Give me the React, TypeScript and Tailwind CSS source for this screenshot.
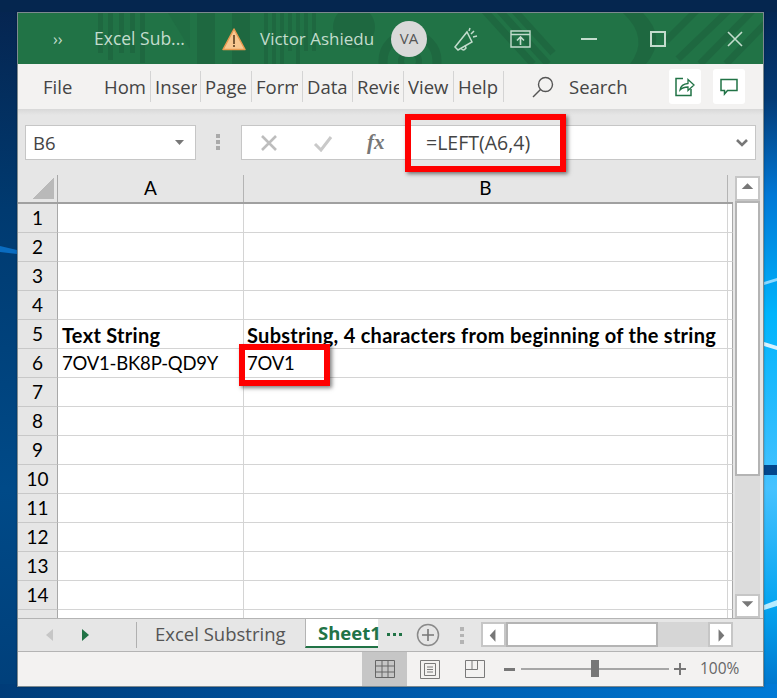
import { ReactNode } from "react";

const ui = "font-['Open_Sans','Noto_Sans',sans-serif]";
const cell = "font-['Lato','Carlito',sans-serif]";

const tabs = [
  { label: "Hom", w: "w-[47px]" },
  { label: "Inser", w: "w-[46px]" },
  { label: "Page", w: "w-[47px]" },
  { label: "Form", w: "w-[47px]" },
  { label: "Data", w: "w-[46px]" },
  { label: "Revie", w: "w-[47px]" },
  { label: "View", w: "w-[46px]" },
  { label: "Help", w: "w-[46px]" },
];

const rows: { n: number; a?: string; b?: string; bold?: boolean }[] = [
  { n: 1 }, { n: 2 }, { n: 3 }, { n: 4 },
  { n: 5, a: "Text String", b: "Substring, 4 characters from beginning of the string", bold: true },
  { n: 6, a: "7OV1-BK8P-QD9Y", b: "7OV1" },
  { n: 7 }, { n: 8 }, { n: 9 }, { n: 10 }, { n: 11 }, { n: 12 }, { n: 13 }, { n: 14 },
];

function Wallpaper() {
  return (
    <svg className="absolute inset-0 h-full w-full" viewBox="0 0 777 698">
      <defs>
        <linearGradient id="wl" x1="0" y1="0" x2="0" y2="1">
          <stop offset="0" stopColor="#06244f" />
          <stop offset="0.3" stopColor="#003a70" />
          <stop offset="0.7" stopColor="#004a88" />
          <stop offset="1" stopColor="#003f7a" />
        </linearGradient>
        <linearGradient id="wr" x1="0" y1="0" x2="0" y2="1">
          <stop offset="0" stopColor="#04244e" />
          <stop offset="0.14" stopColor="#033a75" />
          <stop offset="0.28" stopColor="#0078d6" />
          <stop offset="0.45" stopColor="#00b4fc" />
          <stop offset="0.7" stopColor="#46c2ff" />
          <stop offset="0.87" stopColor="#04a4f0" />
          <stop offset="1" stopColor="#0070c8" />
        </linearGradient>
        <linearGradient id="wb" x1="0" y1="0" x2="1" y2="0">
          <stop offset="0" stopColor="#003c78" />
          <stop offset="0.5" stopColor="#0058a8" />
          <stop offset="1" stopColor="#007ad6" />
        </linearGradient>
      </defs>
      <rect width="777" height="698" fill="url(#wl)" />
      <rect x="700" width="77" height="698" fill="url(#wr)" />
      <rect y="684" width="777" height="14" fill="url(#wb)" />
      <rect y="0" width="777" height="12" fill="#05264f" />
      <path d="M0 246 L17 250 V254 L0 252 Z" fill="#0a6cc0" />
      <path d="M764 282 L777 278 V281 L764 285 Z" fill="#8ad8ff" />
      <path d="M764 342 L777 346 V350 L764 346 Z" fill="#d8f2ff" />
      <rect x="764" y="465" width="13" height="10" fill="#03478c" />
      <path d="M764 605 L777 600 V606 L764 610 Z" fill="#b8ecff" />
    </svg>
  );
}

function TitlePattern() {
  const d = "#1e6840";
  return (
    <svg className="absolute inset-0 h-full w-full" viewBox="0 0 745 51">
      <g fill={d}>
        <rect x="80" y="0" width="5" height="40" />
        <rect x="90" y="0" width="5" height="47" />
        <rect x="101" y="0" width="5" height="40" />
        <rect x="112" y="0" width="5" height="40" />
        <rect x="122" y="0" width="5" height="50" />
        <rect x="179" y="0" width="18" height="51" />
        <rect x="214" y="0" width="18" height="51" />
        <rect x="246" y="0" width="4" height="51" />
        <rect x="254" y="0" width="4" height="51" />
        <rect x="262" y="0" width="4" height="51" />
        <rect x="270" y="0" width="4" height="38" />
        <rect x="278" y="0" width="4" height="51" />
        <rect x="286" y="0" width="4" height="38" />
        <rect x="294" y="0" width="4" height="38" />
        <circle cx="336" cy="14" r="21" />
        <path d="M150 0 L172 36 V0 Z" opacity="0.5" />
      </g>
      <circle cx="392" cy="48" r="27" fill="none" stroke={d} strokeWidth="9" />
      <circle cx="392" cy="48" r="9" fill="none" stroke={d} strokeWidth="6" />
      <path d="M605 0 Q632 25 612 51 L628 51 Q650 25 625 0 Z" fill={d} />
      <g stroke={d} strokeWidth="7" fill="none">
        <path d="M465 -4 L515 51" />
        <path d="M480 -4 L530 51" />
        <path d="M495 -4 L535 40" />
        <path d="M648 28 L680 -4" />
        <path d="M660 46 L712 -4" />
        <path d="M682 51 L736 -4" />
        <path d="M708 51 L748 10" />
      </g>
    </svg>
  );
}

function Warning() {
  return (
    <svg width="24" height="24" viewBox="0 0 24 24">
      <path d="M12 2 L23 22.5 H1 Z" fill="#f8c890" stroke="#e89a50" strokeWidth="1.5" strokeLinejoin="round" />
      <rect x="11" y="8" width="2" height="9" fill="#7a5a36" />
      <rect x="11" y="18" width="2" height="2" fill="#7a5a36" />
    </svg>
  );
}

function Icon({ w, h, children, className }: { w: number; h: number; children: ReactNode; className?: string }) {
  return (
    <svg width={w} height={h} viewBox={`0 0 ${w} ${h}`} className={className} fill="none">
      {children}
    </svg>
  );
}

function ArrowBtn({ dir, className }: { dir: "up" | "down" | "left" | "right"; className: string }) {
  const p = { up: "M5 11 H17 L11 5 Z", down: "M5 6 H17 L11 12 Z", left: "M13 5 V18 L7 11.5 Z", right: "M9 5 V18 L15 11.5 Z" }[dir];
  return (
    <div className={`flex items-center justify-center border-2 border-[#c6c6c6] bg-white ${className}`}>
      <Icon w={22} h={22}>
        <path d={p} fill="#777" />
      </Icon>
    </div>
  );
}

function TitleBar() {
  const t = "#c3dccd";
  return (
    <div className={`relative flex h-[51px] shrink-0 items-center bg-[#217346] ${ui}`}>
      <TitlePattern />
      <div className="relative flex w-full items-center text-[#c3dccd]">
        <span className="ml-[35px] w-[41px] text-[16px] leading-none">››</span>
        <span className="w-[128px] text-[17.5px] whitespace-nowrap">Excel Sub...</span>
        <Warning />
        <span className="ml-[14px] w-[131px] text-[17px] whitespace-nowrap">Victor Ashiedu</span>
        <div className="flex h-[36px] w-[36px] items-center justify-center rounded-full bg-[#d9d9d9] text-[15px] text-[#555]">VA</div>
        <Icon w={26} h={26} className="ml-[26px]">
          <path d="M2 21 L14 6 L19 16 L5 24 Z M8 22 Q10 26 13 22 L12 19" stroke={t} strokeWidth="1.5" />
          <path d="M18 8 L21 5 M20 11 L24 10 M16 5 L17 2" stroke={t} strokeWidth="1.5" />
        </Icon>
        <Icon w={21} h={18} className="ml-[31px]">
          <path d="M1 1 H20 V17 H1 Z M1 4.5 H20" stroke={t} strokeWidth="1.4" />
          <path d="M10.5 15 V8 M7 10.5 L10.5 7 L14 10.5" stroke={t} strokeWidth="1.6" />
        </Icon>
        <div className="ml-[50px] h-[2px] w-[16px] bg-[#c3dccd]" />
        <div className="ml-[53px] h-[16px] w-[16px] border-2 border-[#c3dccd]" />
        <Icon w={16} h={16} className="ml-[61px]">
          <path d="M1 1 L15 15 M15 1 L1 15" stroke={t} strokeWidth="1.6" />
        </Icon>
      </div>
    </div>
  );
}

function RibbonTabs() {
  return (
    <div className={`flex h-[45px] shrink-0 items-center bg-[#f3f2f1] text-[18.5px] text-[#444] ${ui}`}>
      <span className="ml-[25px] w-[61px]">File</span>
      {tabs.map((t) => (
        <div key={t.label} className={`mr-[4px] flex h-[31px] items-center whitespace-nowrap border-r border-[#d4d4d4] ${t.w}`}>
          <span className="h-[31px] w-[42px] overflow-hidden leading-[31px]">{t.label}</span>
        </div>
      ))}
      <Icon w={22} h={22} className="ml-[24px]">
        <circle cx="13.5" cy="8.5" r="7" stroke="#555" strokeWidth="1.4" />
        <path d="M8.5 13.5 L1 21" stroke="#555" strokeWidth="1.5" />
      </Icon>
      <span className="ml-[15px] w-[60px]">Search</span>
      <div className="ml-[40px] flex h-[35px] w-[32px] items-center justify-center rounded-[3px] bg-white">
        <Icon w={20} h={20}>
          <path d="M8 1.5 H1 V18.5 H16 V12" stroke="#217346" strokeWidth="1.5" />
          <path d="M5 13 Q6 7 13 6.5 V2.5 L19 8 L13 13.5 V10 Q8 10 5 13 Z" stroke="#217346" strokeWidth="1.3" />
        </Icon>
      </div>
      <div className="ml-[12px] flex h-[35px] w-[32px] items-center justify-center rounded-[3px] bg-white">
        <Icon w={18} h={18}>
          <path d="M1 1.5 H17 V12.5 H7.5 L4.5 16 V12.5 H1 Z" stroke="#217346" strokeWidth="1.5" />
        </Icon>
      </div>
    </div>
  );
}

function FormulaBar() {
  return (
    <div className="flex h-[66px] shrink-0 items-start bg-[#e6e6e6] bg-[linear-gradient(#d8d8d8,#e6e6e6_6px)] pt-[16px]">
      <div className={`ml-[7px] flex h-[35px] w-[171px] items-center border border-[#c6c6c6] bg-white pl-[7px] text-[18.5px] text-[#444] ${ui}`}>
        <span className="flex-1">B6</span>
        <Icon w={9} h={5} className="mr-[11px]">
          <path d="M0 0 H9 L4.5 5 Z" fill="#777" />
        </Icon>
      </div>
      <div className="ml-[20px] mt-[9px] flex w-[4px] flex-col gap-[2.5px]">
        <div className="h-[3.5px] bg-[#aaa]" />
        <div className="h-[3.5px] bg-[#aaa]" />
        <div className="h-[3.5px] bg-[#aaa]" />
      </div>
      <div className={`ml-[21px] flex h-[35px] w-[515px] items-center border border-[#c6c6c6] bg-white text-[19.5px] text-[#444] ${ui}`}>
        <Icon w={18} h={18} className="ml-[18px]">
          <path d="M2 2 L16 16 M16 2 L2 16" stroke="#bdbdbd" strokeWidth="2.6" />
        </Icon>
        <Icon w={20} h={18} className="ml-[35px]">
          <path d="M2 10 L8 16 L18 3" stroke="#c9c9c9" strokeWidth="3" />
        </Icon>
        <span className="ml-[34px] w-[38px] font-['Liberation_Serif',serif] text-[21px] font-bold italic text-[#777]">fx</span>
        <span className="ml-[21px] flex-1">=LEFT(A6,4)</span>
        <Icon w={12} h={8} className="mr-[7px]">
          <path d="M1 1 L6 6 L11 1" stroke="#777" strokeWidth="2.6" />
        </Icon>
      </div>
    </div>
  );
}

function Grid() {
  return (
    <div className="flex min-h-0 flex-1 bg-[#e6e6e6]">
      <div className="flex w-[715px] flex-col overflow-hidden">
        {/* column headers */}
        <div className={`flex h-[29px] shrink-0 border-b-2 border-[#a0a0a0] text-[19px] text-black ${cell}`}>
          <div className="flex w-[40px] items-end justify-end border-r border-[#a8a8a8] pb-[3px] pr-[3px]">
            <div className="h-[21px] w-[21px] bg-[linear-gradient(135deg,transparent_50%,#b9b9b9_50%)]" />
          </div>
          <div className="flex w-[186px] items-center justify-center border-r border-[#b4b4b4]">A</div>
          <div className="flex w-[484px] items-center justify-center border-r border-[#b4b4b4]">B</div>
        </div>
        {rows.map((r) => (
          <div key={r.n} className={`flex h-[29px] shrink-0 text-black ${cell}`}>
            <div className="flex w-[40px] items-center justify-center border-b border-r border-[#a8a8a8] border-b-[#c8c8c8] bg-[#e6e6e6] pt-[1px] text-[19px]">{r.n}</div>
            <div className={`flex w-[186px] items-center border-b border-r border-[#d4d4d4] bg-white pl-[4px] pt-[1px] whitespace-nowrap ${r.bold ? "text-[20px] font-bold tracking-[0.28px]" : "text-[18.5px] tracking-[-0.2px]"}`}>{r.a}</div>
            <div className={`flex w-[484px] items-center border-b border-r border-[#d4d4d4] bg-white pl-[3px] pt-[1px] whitespace-nowrap ${r.bold ? "text-[20px] font-bold tracking-[0.28px]" : "text-[18.5px] tracking-[-0.2px]"}`}>{r.b}</div>
            <div className="w-[5px] border-b border-r border-[#d4d4d4] border-r-[#a8a8a8] bg-white" />
          </div>
        ))}
        <div className="flex min-h-0 flex-1">
          <div className="w-[40px] border-r border-[#a8a8a8] bg-[#e6e6e6]" />
          <div className="w-[186px] border-r border-[#d4d4d4] bg-white" />
          <div className="w-[484px] border-r border-[#d4d4d4] bg-white" />
          <div className="w-[5px] border-r border-[#a8a8a8] bg-white" />
        </div>
      </div>
      {/* vertical scrollbar */}
      <div className="ml-[2px] flex w-[25px] flex-col pt-[1px]">
        <ArrowBtn dir="up" className="h-[25px] shrink-0" />
        <div className="h-[275px] shrink-0 border-2 border-[#b4b4b4] bg-white" />
        <div className="flex-1 bg-[#dcdcdc]" />
        <ArrowBtn dir="down" className="h-[24px] shrink-0" />
      </div>
    </div>
  );
}

function SheetTabs() {
  return (
    <div className={`flex h-[34px] shrink-0 items-start border-y border-y-[#b4b4b4] bg-[#e6e6e6] text-[18.5px] ${ui}`}>
      <Icon w={10} h={14} className="ml-[27px] mt-[9px]">
        <path d="M8 1 V13 L1 7 Z" fill="#c6c6c6" />
      </Icon>
      <Icon w={10} h={14} className="ml-[25px] mt-[9px]">
        <path d="M2 1 V13 L9 7 Z" fill="#217346" />
      </Icon>
      <div className="ml-[46px] mt-[3px] h-[26px] w-px bg-[#b0b0b0]" />
      <div className="w-[168px] whitespace-nowrap pl-[18px] leading-[30px] text-[#555]">Excel Substring</div>
      <div className="flex h-[29px] w-[73px] items-center whitespace-nowrap border-b-2 border-l border-b-[#217346] border-l-[#b4b4b4] bg-white pl-[12px] font-bold text-[#217346]">Sheet1</div>
      <span className="ml-[9px] mt-[14px] flex gap-[3px]">
        <i className="h-[3px] w-[3px] bg-[#217346]" />
        <i className="h-[3px] w-[3px] bg-[#217346]" />
        <i className="h-[3px] w-[3px] bg-[#217346]" />
      </span>
      <Icon w={24} h={24} className="ml-[14px] mt-[4px]">
        <circle cx="12" cy="12" r="10.5" stroke="#8a8a8a" strokeWidth="1.5" />
        <path d="M12 6 V18 M6 12 H18" stroke="#777" strokeWidth="1.6" />
      </Icon>
      <div className="ml-[20px] mt-[8px] flex w-[4px] flex-col gap-[3px]">
        <div className="h-[3.5px] bg-[#b4b4b4]" />
        <div className="h-[3.5px] bg-[#b4b4b4]" />
        <div className="h-[3.5px] bg-[#b4b4b4]" />
      </div>
      <div className="ml-[17px] mt-[3px] flex h-[25px] w-[252px]">
        <ArrowBtn dir="left" className="w-[25px]" />
        <div className="w-[152px] border-2 border-[#b4b4b4] bg-white" />
        <div className="flex-1 bg-[#d6d6d6]" />
        <ArrowBtn dir="right" className="w-[25px]" />
      </div>
    </div>
  );
}

function StatusBar() {
  const g = "#7a7a7a";
  return (
    <div className={`flex h-[34px] shrink-0 items-center bg-[#f3f2f1] text-[15.5px] text-[#666] ${ui}`}>
      <div className="ml-[344px] flex h-full w-[45px] items-center justify-center bg-[#c6c6c6]">
        <Icon w={20} h={18}>
          <path d="M.5 .5 H19.5 V17.5 H.5 Z M.5 6 H19.5 M.5 12 H19.5 M7 .5 V17.5 M13 .5 V17.5" stroke="#666" />
        </Icon>
      </div>
      <Icon w={20} h={19} className="ml-[13px]">
        <path d="M.5 .5 H19.5 V18.5 H.5 Z M4.5 3.5 H15.5 V15.5 H4.5 Z M7 7 H13 M7 9.5 H13 M7 12 H13" stroke={g} />
      </Icon>
      <Icon w={20} h={18} className="ml-[25px]">
        <path d="M.5 .5 H19.5 V17.5 H.5 Z M.5 9.5 H12.5 V.5 M7 .5 V9.5" stroke={g} />
      </Icon>
      <div className="ml-[19px] h-[3px] w-[11px] bg-[#777]" />
      <div className="relative ml-[6px] h-[2px] w-[148px] bg-[#a6a6a6]">
        <div className="absolute left-[70px] top-[-8px] h-[17px] w-[8px] bg-[#777]" />
      </div>
      <Icon w={12} h={12} className="ml-[5px]">
        <path d="M6 0 V12 M0 6 H12" stroke="#777" strokeWidth="2" />
      </Icon>
      <span className="ml-[14px]">100%</span>
    </div>
  );
}

export default function App() {
  return (
    <div className="relative h-[698px] w-[777px] overflow-hidden pl-[17px] pt-[12px]">
      <Wallpaper />
      <div className="relative flex h-[675px] w-[747px] flex-col border border-[#7d8a90] shadow-[0_0_2px_rgba(0,0,0,0.3)]">
        <TitleBar />
        <RibbonTabs />
        <FormulaBar />
        <Grid />
        <SheetTabs />
        <StatusBar />

        {/* red highlight boxes */}
        <div className="absolute left-[387px] top-[101px] h-[58px] w-[161px] border-[6px] border-[#ff0000] shadow-[2px_2px_4px_rgba(0,0,0,0.5)]" />
        <div className="absolute left-[221px] top-[331px] h-[42px] w-[91px] border-[6px] border-[#ff0000] shadow-[2px_2px_4px_rgba(0,0,0,0.5)]" />
      </div>
    </div>
  );
}
